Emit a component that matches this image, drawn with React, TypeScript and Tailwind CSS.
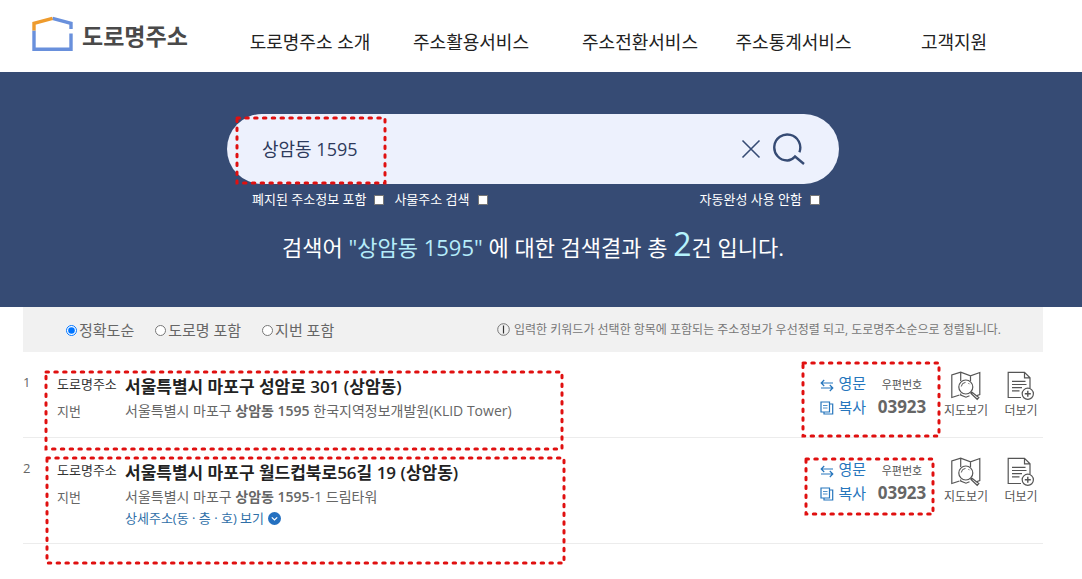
import React from 'react';

interface AddressResult {
  id: number;
  road: string;
  jibun: React.ReactNode;
  zip: string;
  hasDetail: boolean;
  addressMark: string;
  zipMark: string;
}

const menus = ['도로명주소 소개', '주소활용서비스', '주소전환서비스', '주소통계서비스', '고객지원'];

const sortOptions = ['정확도순', '도로명 포함', '지번 포함'];

const results: AddressResult[] = [
  {
    id: 1,
    road: '서울특별시 마포구 성암로 301 (상암동)',
    jibun: <>서울특별시 마포구 <b className="font-semibold">상암동 1595</b> 한국지역정보개발원(KLID Tower)</>,
    zip: '03923',
    hasDetail: false,
    addressMark: 'left-[23px] top-5 w-[516px] h-[77px]',
    zipMark: 'right-[104px] top-[11px] w-[136px] h-[73px]',
  },
  {
    id: 2,
    road: '서울특별시 마포구 월드컵북로56길 19 (상암동)',
    jibun: <>서울특별시 마포구 <b className="font-semibold">상암동 1595</b>-1 드림타워</>,
    zip: '03923',
    hasDetail: true,
    addressMark: 'left-6 top-5 w-[517px] h-[105px]',
    zipMark: 'right-[110px] top-[21px] w-[127px] h-[55px]',
  },
];

// red dashed frame drawn over the highlighted area
const Mark: React.FC<{ className: string }> = ({ className }) => (
  <svg className={`absolute z-10 overflow-visible pointer-events-none ${className}`} aria-hidden="true">
    <rect width="100%" height="100%" fill="none" stroke="#e01010" strokeWidth="3" strokeLinecap="round" strokeDasharray="2.5 6.3" />
  </svg>
);

const HouseLogo = () => (
  <svg width="42" height="36" viewBox="0 0 42 36" fill="none" strokeWidth="3.4" aria-hidden="true">
    <path d="M2 14.5V33.3H39V17.5M39 13V7.3L20.5 2.3" stroke="#6990dc" />
    <path d="M2 14.5V7.3L20.5 2.3" stroke="#ee9b2d" />
  </svg>
);

const SwapIcon = () => (
  <svg width="14" height="13" viewBox="0 0 14 13" fill="none" stroke="#2676bd" strokeWidth="1.2" className="mt-1" aria-hidden="true">
    <path d="M4.2 1L1.2 4L4.2 7M1.2 4H13M9.8 6L12.8 9L9.8 12M12.8 9H1" />
  </svg>
);

const CopyIcon = () => (
  <svg width="14" height="14" viewBox="0 0 14 14" fill="none" stroke="#2676bd" strokeWidth="1.2" className="mt-0.5" aria-hidden="true">
    <path d="M1 1H9.5V11H1ZM9.5 3H12.7V13H4V11" />
    <path d="M3 4.5H7.5M3 7H7.5" strokeWidth="0.8" />
  </svg>
);

const MapIcon = () => (
  <svg width="30" height="30" viewBox="0 0 30 30" fill="none" stroke="#555" strokeWidth="1.2" aria-hidden="true">
    <path d="M8.5 24L0.8 26.5V4L9.7 1.2L19.5 4.8L28.8 1.5V23.5L25.5 24.8M9.7 1.2V10M19.5 4.8V10M9.7 22.5V24L15 26.2L18.5 24.8" />
    <circle cx="14.8" cy="16" r="7" />
    <path d="M10.3 15.5A4.6 4.6 0 0 1 14.5 11.4M17.5 12.2L18.5 13.2" strokeWidth="1" />
    <path d="M19.8 21L21.3 22.5M21 21.3L27.8 26.5L26.2 28.3L20 22.4Z" />
  </svg>
);

const MoreIcon = () => (
  <svg width="28" height="30" viewBox="0 0 28 30" fill="none" stroke="#555" strokeWidth="1.2" aria-hidden="true">
    <path d="M14 26.5H1.2V1.3H17.5L23 6.8V17M17.5 1.3V6.8H23" />
    <path d="M5 10.3H18.5M5 13.5H19.5M5 16.7H15M5 19.9H12.5" />
    <circle cx="20.8" cy="22.8" r="5.6" />
    <path d="M20.8 19.8V25.8M17.8 22.8H23.8" strokeWidth="1.4" />
  </svg>
);

const Header = () => (
  <header className="flex h-[72px] pl-8 pr-[33px]">
    <a href="#" className="flex w-[198px] shrink-0 items-start gap-2 pt-4">
      <HouseLogo />
      <span className="pt-2 text-[23px] leading-6 font-bold text-[#4a4a4a] whitespace-nowrap">도로명주소</span>
    </a>
    <nav className="grid flex-1 grid-cols-[160fr_162fr_176fr_131fr_190fr] pt-[30px]">
      {menus.map((menu) => (
        <a key={menu} href="#" className="flex justify-center text-lg leading-6 text-[#222] whitespace-nowrap">
          {menu}
        </a>
      ))}
    </nav>
  </header>
);

const CheckOption: React.FC<{ label: string }> = ({ label }) => (
  <label className="flex items-center gap-2 whitespace-nowrap">
    {label}
    <input type="checkbox" className="mt-0.5 size-2.5 appearance-none border border-[#767676] bg-white checked:bg-[#0075ff]" />
  </label>
);

const SearchHero = () => (
  <section className="h-[235px] bg-[#364b74] pl-[23px] pr-[39px] pt-[42px]">
    <div className="mx-auto max-w-[612px]">
      <form className="relative flex h-[70px] items-center rounded-full bg-[#edf1fd] pl-[35px] pr-[34px]" onSubmit={(e) => e.preventDefault()}>
        <input
          type="text"
          aria-label="주소 검색어"
          defaultValue="상암동 1595"
          className="min-w-0 flex-1 bg-transparent text-lg text-[#2e3a5c] outline-none"
        />
        <button type="button" aria-label="지우기" className="mr-3">
          <svg width="20" height="20" viewBox="0 0 20 20" fill="none" stroke="#364b74" strokeWidth="1.6">
            <path d="M1.5 1.5L18.5 18.5M18.5 1.5L1.5 18.5" />
          </svg>
        </button>
        <button type="submit" aria-label="검색">
          <svg width="32" height="32" viewBox="0 0 32 32" fill="none" stroke="#364b74" strokeWidth="2.4">
            <path d="M26.4 19.2A13 13 0 1 0 14.5 27.5Q18.5 27.5 22 23.5L31 31" />
          </svg>
        </button>
        <Mark className="left-2.5 top-1 w-[148px] h-[65px]" />
      </form>
      <div className="mt-1.5 flex justify-between pl-[25px] pr-[19px] text-[13px] leading-[18px] text-white">
        <div className="flex gap-2.5">
          <CheckOption label="폐지된 주소정보 포함" />
          <CheckOption label="사물주소 검색" />
        </div>
        <CheckOption label="자동완성 사용 안함" />
      </div>
    </div>
    <p className="mt-4 text-center text-[22px] leading-10 text-white whitespace-nowrap">
      검색어 <span className="text-[#b5ecfa]">"상암동 <span className="font-medium">1595</span>"</span> 에 대한 검색결과 총{' '}
      <span className="text-[32px] text-[#b5f3fd]">2</span>건 입니다.
    </p>
  </section>
);

const SortBar = () => (
  <div className="flex h-[45px] items-center justify-between bg-[#f1f1f1] pl-[43px] pr-[42px] text-[#666]">
    <div className="flex gap-[21px]">
      {sortOptions.map((option, i) => (
        <label key={option} className="flex items-center gap-0.5 text-[15px] leading-5 whitespace-nowrap">
          <input type="radio" name="sort" defaultChecked={i === 0} className="mt-0.5 size-[11px]" />
          {option}
        </label>
      ))}
    </div>
    <p className="flex items-center gap-1 text-xs text-[#777] whitespace-nowrap">
      <svg width="13" height="13" viewBox="0 0 13 13" fill="none" stroke="#777" aria-hidden="true">
        <circle cx="6.5" cy="6.5" r="5.8" />
        <path d="M6.5 2.5V10.5" stroke="#333" strokeWidth="1.2" />
      </svg>
      입력한 키워드가 선택한 항목에 포함되는 주소정보가 우선정렬 되고, 도로명주소순으로 정렬됩니다.
    </p>
  </div>
);

const ResultRow: React.FC<{ item: AddressResult }> = ({ item }) => (
  <li className="relative flex border-b border-[#ececec] pb-[15px]">
    <span className="w-[34px] shrink-0 pt-[22px] text-[13px] leading-4 text-[#666]">{item.id}</span>
    <dl className="grid flex-1 grid-cols-[68px_1fr] content-start whitespace-nowrap pt-[22px]">
      <dt className="text-[13px] leading-5 text-[#333]">도로명주소</dt>
      <dd className="text-[17px] leading-[26px] font-semibold text-[#222]">{item.road}</dd>
      <dt className="text-[13px] leading-[22px] text-[#666]">지번</dt>
      <dd className="text-sm leading-[22px] text-[#666]">
        {item.jibun}
        {item.hasDetail && (
          <button type="button" className="flex h-5 items-center gap-1 text-[13px] leading-4 text-[#2f6fa8]">
            상세주소(동 · 층 · 호) 보기
            <svg width="13" height="13" viewBox="0 0 13 13" fill="none" aria-hidden="true">
              <circle cx="6.5" cy="6.5" r="6.5" fill="#2470c0" />
              <path d="M3.8 5.3L6.5 8L9.2 5.3" stroke="#fff" strokeWidth="1.2" />
            </svg>
          </button>
        )}
      </dd>
    </dl>
    <div className="flex items-start pr-[5px] pt-[19px] text-[#555] whitespace-nowrap">
      <div className="flex flex-col text-[15px] leading-6 text-[#2676bd]">
        <button type="button" className="flex items-center gap-1"><SwapIcon />영문</button>
        <button type="button" className="flex items-center gap-1"><CopyIcon />복사</button>
      </div>
      <div className="ml-[11px] flex w-[50px] flex-col items-center pt-1">
        <span className="text-[11px] leading-5">우편번호</span>
        <span className="text-[17px] leading-6 font-bold text-[#666]">{item.zip}</span>
      </div>
      <button type="button" className="ml-4 flex w-[46px] flex-col items-center text-xs leading-4">
        <MapIcon />
        <span className="mt-0.5">지도보기</span>
      </button>
      <button type="button" className="ml-[15px] flex w-[34px] flex-col items-center text-xs leading-4">
        <MoreIcon />
        <span className="mt-0.5">더보기</span>
      </button>
    </div>
    <Mark className={item.addressMark} />
    <Mark className={item.zipMark} />
  </li>
);

export default function App() {
  return (
    <div className="bg-white pb-9 font-['Open_Sans','Noto_Sans_CJK_KR',sans-serif]">
      <Header />
      <SearchHero />
      <main className="pl-[23px] pr-[39px]">
        <SortBar />
        <ul>
          {results.map((item) => (
            <ResultRow key={item.id} item={item} />
          ))}
        </ul>
      </main>
    </div>
  );
}
